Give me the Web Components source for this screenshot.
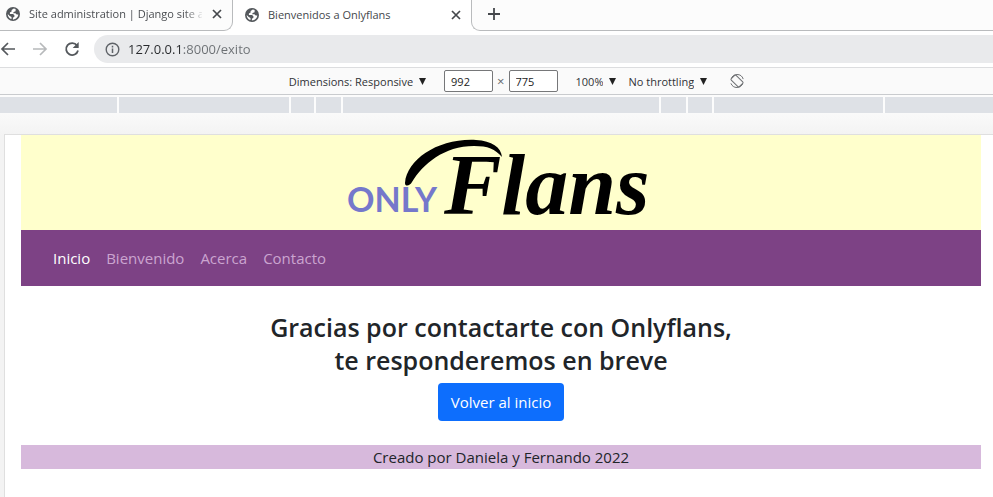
<!DOCTYPE html>
<html lang="es">
<head>
<meta charset="utf-8">
<title>Bienvenidos a Onlyflans</title>
<style>
  html, body { margin: 0; height: 100%; }
  body { font-family: "Open Sans", "Noto Sans", sans-serif; background: #fff; color: #212529; overflow: hidden; }
</style>
</head>
<body>
<browser-window>
  <tab-strip slot="tabs"></tab-strip>
  <address-bar slot="address"></address-bar>
  <device-toolbar slot="tools"></device-toolbar>
  <width-ruler slot="tools"></width-ruler>
  <site-banner></site-banner>
  <site-nav></site-nav>
  <thanks-message>Gracias por contactarte con Onlyflans,<br>te responderemos en breve</thanks-message>
  <site-footer>Creado por Daniela y Fernando 2022</site-footer>
</browser-window>

<script>
const define = (name, html, setup) => {
  const template = document.createElement('template');
  template.innerHTML = html;
  customElements.define(name, class extends HTMLElement {
    constructor() {
      super();
      this.attachShadow({ mode: 'open' }).append(template.content.cloneNode(true));
    }
    connectedCallback() {
      if (setup) setup(this);
    }
  });
};

define('globe-icon', `
<style>:host { display: block; flex: none; width: 14px; height: 14px; } svg { display: block; }</style>
<svg width="14" height="14" viewBox="0 0 14 14" aria-hidden="true">
  <circle cx="7" cy="7" r="7" fill="#54585c"/>
  <path d="M7.8 1.6 5.6 2.9v1.6L3.9 5.6v1.5h3.2l1.3 1.2v1.5l-1.5.9v1.7c2.6 0 5.2-2.2 5.4-5h-1.6L9.4 6.2H7.2l.4-1.3 2-.7V2.1zM1.7 6.9c0 2.5 1.6 4.5 3.8 5.2V10L3.700 8.900z" fill="#fff"/>
</svg>`);

define('browser-tab', `
<style>
  :host { display: flex; align-items: center; box-sizing: border-box; height: 31px; padding: 0 9px 2px 6px; gap: 9px;
    background: #fcfcfc; border: solid #b9bbbd; border-width: 0 1px 1px 0; border-bottom-right-radius: 9px; color: #4a4d51; }
  :host([active]) { background: #fff; border-width: 0; border-radius: 0; padding-left: 12px; color: #45484c; }
  .title { flex: 1; min-width: 0; overflow: hidden; white-space: nowrap; font-size: 11px; line-height: 18px; }
  :host(:not([active])) .title { mask-image: linear-gradient(to right, #000 155px, transparent 176px); }
  button { display: block; border: 0; padding: 0; background: none; width: 12px; height: 12px; }
  svg { display: block; }
</style>
<globe-icon></globe-icon>
<span class="title"><slot></slot></span>
<button aria-label="Cerrar"><svg width="12" height="12" viewBox="0 0 12 12"><path d="m2 2 8 8m0-8-8 8" stroke="#45484c" stroke-width="1.7"/></svg></button>`);

define('tab-strip', `
<style>
  :host { display: grid; grid-template-columns: 233px 238px 1fr; background: #fff; }
  .rest { box-sizing: border-box; height: 31px; border: solid #b9bbbd; border-width: 0 0 1px 1px; border-bottom-left-radius: 9px; background: #fcfcfc; padding: 7px 0 0 15px; }
  button { display: block; border: 0; padding: 0; background: none; }
  svg { display: block; }
</style>
<browser-tab>Site administration | Django site admin</browser-tab>
<browser-tab active>Bienvenidos a Onlyflans</browser-tab>
<div class="rest"><button aria-label="Nueva pestaña"><svg width="14" height="14" viewBox="0 0 14 14"><path d="M7 1v12M1 7h12" stroke="#45484c" stroke-width="1.8"/></svg></button></div>`);

define('address-bar', `
<style>
  :host { display: flex; align-items: center; height: 36px; border-bottom: 1px solid #dcdddf; background: #fff; }
  button { display: block; flex: none; border: 0; padding: 0; background: none; width: 16px; height: 16px; margin-right: 16px; }
  button:first-child { margin-left: -2px; }
  svg { display: block; flex: none; }
  form { flex: 1; display: flex; align-items: center; gap: 8px; height: 28px; margin: 0 -14px 0 -2px; padding: 0 11px; border-radius: 14px; background: #e9eaec; }
  input { flex: 1; min-width: 0; height: 20px; border: 0; padding: 0; outline: 0; font: inherit; font-size: 13px; color: #6b6f73;
    background: linear-gradient(to right, #27292c 55px, #6b6f73 55px); background-clip: text; -webkit-text-fill-color: transparent; }
</style>
<button aria-label="Atrás"><svg width="16" height="16" viewBox="0 0 16 16"><path d="M15 8H2M8 2 2 8l6 6" fill="none" stroke="#54585c" stroke-width="1.7"/></svg></button>
<button aria-label="Adelante"><svg width="16" height="16" viewBox="0 0 16 16"><path d="M1 8h13M8 2l6 6-6 6" fill="none" stroke="#b7b9bb" stroke-width="1.7"/></svg></button>
<button aria-label="Recargar"><svg width="16" height="16" viewBox="0 0 16 16"><path d="M13 4.5A6 6 0 1 0 14 9.500" fill="none" stroke="#54585c" stroke-width="1.8"/><path d="M14.700 1v6H8.700z" fill="#54585c"/></svg></button>
<form>
  <svg width="15" height="15" viewBox="0 0 15 15"><circle cx="7.500" cy="7.500" r="6.300" fill="none" stroke="#5f6368" stroke-width="1.400"/><path d="M7.500 6.500v4.600M7.500 3.700v1.700" stroke="#5f6368" stroke-width="1.500"/></svg>
  <input aria-label="Dirección" value="127.0.0.1:8000/exito">
</form>`);

define('tool-menu', `
<style>
  :host { display: block; }
  label { display: flex; align-items: center; gap: 6px; }
  select { appearance: none; border: 0; padding: 0; margin: 0; background: none; font: inherit; color: inherit; height: 18px; field-sizing: content; }
</style>
<label><select></select><svg width="7" height="7" viewBox="0 0 7 7" aria-hidden="true"><path d="M0 0h7L3.500 7z" fill="#222"/></svg></label>`,
host => {
  const select = host.shadowRoot.querySelector('select');
  select.setAttribute('aria-label', host.getAttribute('label'));
  select.replaceChildren(new Option(host.getAttribute('value')));
});

define('device-toolbar', `
<style>
  :host { display: flex; align-items: center; justify-content: center; height: 26px; padding: 0 0 0 41px; border-bottom: 1px solid #c9cbce; background: #fafafa; font-size: 11px; color: #303236; }
  .size { display: flex; align-items: center; gap: 4px; margin: 0 18px; }
  input { box-sizing: border-box; width: 49px; height: 22px; border: 1px solid #767779; border-radius: 2px; padding: 0 6px; background: #fff; font: inherit; color: #222; }
  .size span { font-size: 13px; color: #66696c; }
  tool-menu + tool-menu { margin-left: 12px; }
  button { border: 0; padding: 0; background: none; margin-left: 22px; }
  svg { display: block; }
</style>
<tool-menu label="Dimensions" value="Dimensions: Responsive"></tool-menu>
<span class="size"><input aria-label="Width" value="992"><span>×</span><input aria-label="Height" value="775"></span>
<tool-menu label="Zoom" value="100%"></tool-menu>
<tool-menu label="Throttling" value="No throttling"></tool-menu>
<button aria-label="Rotate"><svg width="16" height="16" viewBox="0 0 16 16"><g fill="none" stroke="#6e7073" stroke-width="1"><rect x="4.600" y="2.300" width="6.800" height="11.400" rx="1" transform="rotate(-45 8 8)"/><circle cx="8" cy="8" r="6.500" stroke-dasharray="14.400 6" stroke-dashoffset="-3"/></g></svg></button>`);

define('width-ruler', `
<style>
  :host { display: grid; grid-template-columns: 117fr 170fr 23fr 25fr 316fr 25fr 24fr 169fr 108fr; gap: 2px; height: 16px; padding-top: 2px; background: #fcfcfc; }
  i { background: #dee1e6; }
</style>
<i></i><i></i><i></i><i></i><i></i><i></i><i></i><i></i><i></i>`);

define('browser-window', `
<style>
  :host { display: flex; flex-direction: column; min-height: 100%; }
  .stage { flex: 1; display: flex; flex-direction: column; padding: 22px 0 0 5px; background: linear-gradient(#fafafa, #f3f3f3 22px); overflow: hidden; }
  main { flex: 1; padding: 0 12px 0 16px; background: #fff; box-shadow: 0 0 0 1px #dfdfdf; }
</style>
<slot name="tabs"></slot>
<slot name="address"></slot>
<slot name="tools"></slot>
<div class="stage"><main><slot></slot></main></div>`);

define('site-banner', `
<style>
  :host { display: flex; justify-content: center; background: #ffffcc; }
  svg { display: block; overflow: visible; }
  .only { font: 700 34px Lato, sans-serif; fill: #7578cb; }
  .flans { font: italic bold 86px "Liberation Serif", serif; fill: #000; }
</style>
<svg width="310" height="95" viewBox="0 0 310 95" role="img" aria-label="Only Flans">
  <text class="only" x="1" y="77">ONLY</text>
  <text class="flans" x="98" y="79">Flans</text>
  <path d="M59 48C61 24 93 3 130 5c16 1 25 7 26 17-7-8-14-11-28-11C98 11 77 29 66 47c-2 4-7 5-7 1z"/>
</svg>`);

define('site-nav', `
<style>
  :host { display: block; background: #7d4285; }
  nav { display: flex; gap: 16px; align-items: center; height: 56px; padding: 0 32px; }
  a { color: #cba5d0; font-size: 15px; line-height: 24px; text-decoration: none; }
  a[aria-current] { color: #fff; }
</style>
<nav><a href="#" aria-current="page">Inicio</a><a href="#">Bienvenido</a><a href="#">Acerca</a><a href="#">Contacto</a></nav>`);

define('thanks-message', `
<style>
  :host { display: flex; flex-direction: column; align-items: center; gap: 6px; padding: 25px 0 24px; text-align: center; }
  h1 { margin: 0; font-family: "Open Sans", sans-serif; font-size: 25px; line-height: 33px; font-weight: 600; color: #212529; }
  a { padding: 7px 13px; border-radius: 4px; background: #0d6efd; color: #fff; font-size: 15px; line-height: 24px; text-decoration: none; }
</style>
<h1><slot></slot></h1>
<a href="#">Volver al inicio</a>`);

define('site-footer', `
<style>:host { display: block; background: #d7b9dc; color: #212529; font-size: 15px; line-height: 24px; text-align: center; }</style>
<slot></slot>`);
</script>
</body>
</html>
